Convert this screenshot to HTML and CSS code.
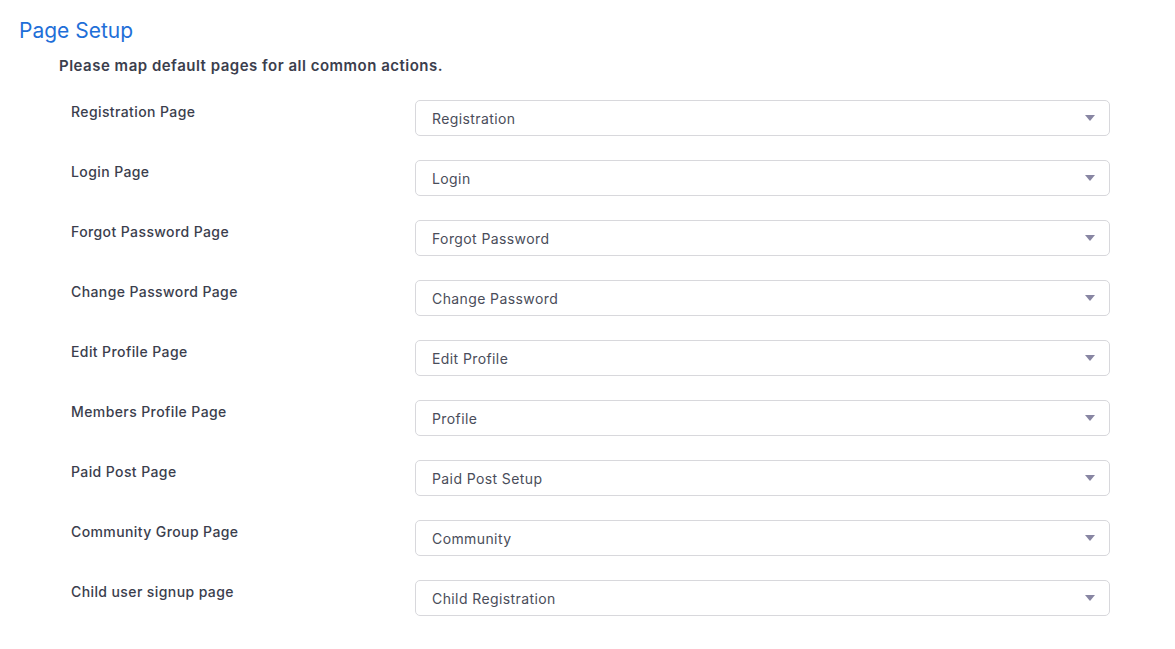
FILE: index.html
```html
<!DOCTYPE html>
<html>
<head>
<meta charset="utf-8">
<link rel="stylesheet" href="styles.css">
</head>
<body>
<div class="page">
  <h1 class="title">Page Setup</h1>
  <p class="desc">Please map default pages for all common actions.</p>
  <div class="rows">
    <div class="row"><span class="label">Registration Page</span><div class="select"><span>Registration</span><i class="caret"></i></div></div>
    <div class="row"><span class="label">Login Page</span><div class="select"><span>Login</span><i class="caret"></i></div></div>
    <div class="row"><span class="label">Forgot Password Page</span><div class="select"><span>Forgot Password</span><i class="caret"></i></div></div>
    <div class="row"><span class="label">Change Password Page</span><div class="select"><span>Change Password</span><i class="caret"></i></div></div>
    <div class="row"><span class="label">Edit Profile Page</span><div class="select"><span>Edit Profile</span><i class="caret"></i></div></div>
    <div class="row"><span class="label">Members Profile Page</span><div class="select"><span>Profile</span><i class="caret"></i></div></div>
    <div class="row"><span class="label">Paid Post Page</span><div class="select"><span>Paid Post Setup</span><i class="caret"></i></div></div>
    <div class="row"><span class="label">Community Group Page</span><div class="select"><span>Community</span><i class="caret"></i></div></div>
    <div class="row"><span class="label">Child user signup page</span><div class="select"><span>Child Registration</span><i class="caret"></i></div></div>
  </div>
</div>
</body>
</html>
```
FILE: styles.css
```css
html, body {
  margin: 0;
  padding: 0;
  background: #ffffff;
}
body {
  font-family: Inter, "Noto Sans", sans-serif;
  color: #3b3e4d;
}
.page {
  padding: 18px 0 0 19px;
}
.title {
  margin: 0;
  font-size: 21px;
  font-weight: 400;
  line-height: 26px;
  color: #1f6fd8;
}
.desc {
  margin: 12px 0 0 40px;
  font-size: 15px;
  font-weight: 600;
  letter-spacing: 0.5px;
  line-height: 20px;
  color: #3b3e4d;
}
.rows {
  margin: 24px 0 0 52px;
  display: flex;
  flex-direction: column;
  gap: 24px;
}
.row {
  display: flex;
  align-items: flex-start;
}
.label {
  width: 344px;
  font-size: 14px;
  font-weight: 500;
  letter-spacing: 0.4px;
  line-height: 20px;
  padding-top: 2px;
  color: #3b3e4d;
}
.select {
  height: 34px;
  width: 663px;
  border: 1px solid #d8d8dc;
  border-radius: 5px;
  display: flex;
  align-items: center;
  justify-content: space-between;
  padding: 0 14px 0 16px;
  box-sizing: content-box;
  font-size: 14px;
  letter-spacing: 0.4px;
  color: #4a4d5a;
}
.caret {
  width: 0;
  height: 0;
  border-left: 5.5px solid transparent;
  border-right: 5.5px solid transparent;
  border-top: 6px solid #8886a3;
}
```
